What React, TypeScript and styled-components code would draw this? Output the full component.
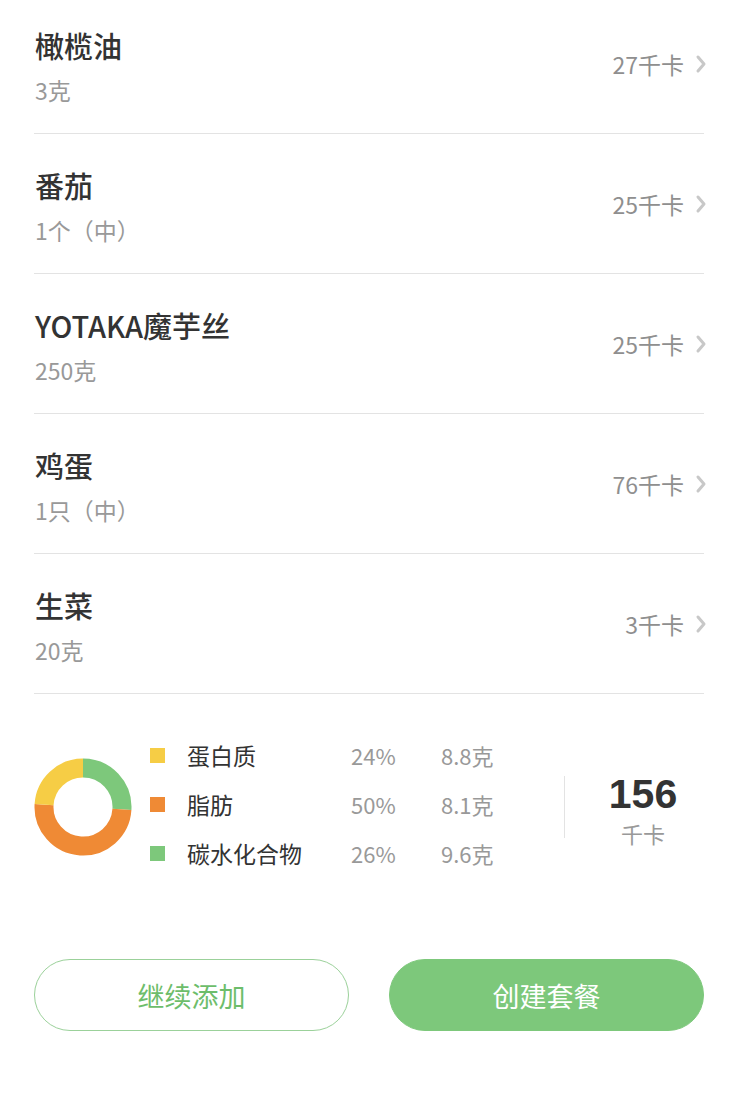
import styled, { createGlobalStyle } from 'styled-components';

const GlobalStyle = createGlobalStyle`
  html, body {
    margin: 0;
    padding: 0;
    background: #fff;
    font-family: "Noto Sans CJK SC", "Noto Sans", sans-serif;
  }
`

const Page = styled.div`
  width: 743px;
  margin-top: -6px;
`

const List = styled.div`
  padding: 0 39px 0 34px;
`

const Row = styled.div`
  height: 140px;
  box-sizing: border-box;
  border-bottom: 1px solid #e3e3e3;
  display: flex;
  align-items: center;
  justify-content: space-between;
`

const Info = styled.div`
  display: flex;
  flex-direction: column;
  gap: 11px;
  padding-left: 1px;
  margin-top: 3px;
`

const Name = styled.div`
  font-size: 29px;
  line-height: 38px;
  font-weight: 500;
  color: #333;
`

const Amount = styled.div`
  font-size: 23px;
  line-height: 30px;
  color: #999;
`

const Right = styled.div`
  display: flex;
  align-items: center;
  gap: 11px;
  color: #8f8f8f;
  font-size: 23px;
  margin-right: -3px;
`

const Summary = styled.div`
  display: flex;
  align-items: center;
  padding: 42px 22px 0 34px;
  height: 180px;
  box-sizing: border-box;
`

const Donut = styled.svg`
  width: 98px;
  height: 98px;
  flex-shrink: 0;
  margin-top: 4px;
`

const Legend = styled.div`
  display: grid;
  grid-template-columns: 37px 164px 90px 80px;
  row-gap: 17px;
  margin-left: 18px;
  margin-top: -2px;
  align-items: center;
`

const Swatch = styled.span<{ $color: string }>`
  width: 15px;
  height: 15px;
  background: ${p => p.$color};
`

const Label = styled.span`
  font-size: 23px;
  line-height: 32px;
  color: #333;
`

const Figure = styled.span`
  font-size: 22px;
  line-height: 32px;
  color: #999;
`

const Divider = styled.div`
  width: 1px;
  height: 62px;
  background: #e3e3e3;
  margin-left: 43px;
  margin-top: 4px;
`

const Total = styled.div`
  flex: 1;
  display: flex;
  flex-direction: column;
  align-items: center;
  margin-top: 10px;
`

const Kcal = styled.div`
  font-family: "Liberation Sans", Arial, sans-serif;
  font-size: 41px;
  font-weight: 700;
  color: #333;
  line-height: 46px;
`

const KcalUnit = styled.div`
  font-size: 22px;
  color: #999;
  line-height: 32px;
`

const Buttons = styled.div`
  display: flex;
  justify-content: space-between;
  padding: 85px 39px 0 34px;
`

const Button = styled.button<{ $primary?: boolean }>`
  width: 315px;
  height: 72px;
  border-radius: 36px;
  font-family: inherit;
  font-size: 27px;
  font-weight: 400;
  cursor: pointer;
  border: 1px solid ${p => (p.$primary ? '#7dc87b' : '#9bd19a')};
  background: ${p => (p.$primary ? '#7dc87b' : '#fff')};
  color: ${p => (p.$primary ? '#fff' : '#6dbd6b')};
`

const foods = [
  { name: '橄榄油', amount: '3克', kcal: '27千卡' },
  { name: '番茄', amount: '1个（中）', kcal: '25千卡' },
  { name: 'YOTAKA魔芋丝', amount: '250克', kcal: '25千卡' },
  { name: '鸡蛋', amount: '1只（中）', kcal: '76千卡' },
  { name: '生菜', amount: '20克', kcal: '3千卡' },
]

const macros = [
  { label: '蛋白质', pct: 24, grams: '8.8克', color: '#f6cd45' },
  { label: '脂肪', pct: 50, grams: '8.1克', color: '#ef8a35' },
  { label: '碳水化合物', pct: 26, grams: '9.6克', color: '#7dc87b' },
]

function Chevron() {
  return (
    <svg width="12" height="20" viewBox="0 0 12 20">
      <path d="M3 3 L9 10 L3 17" fill="none" stroke="#c8c8c8" strokeWidth="3" strokeLinecap="round" strokeLinejoin="round" />
    </svg>
  )
}

function arc(start: number, end: number) {
  const r = 39
  const c = 49
  const a0 = (start / 100) * Math.PI * 2 - Math.PI / 2
  const a1 = (end / 100) * Math.PI * 2 - Math.PI / 2
  const large = end - start > 50 ? 1 : 0
  return `M ${c + r * Math.cos(a0)} ${c + r * Math.sin(a0)} A ${r} ${r} 0 ${large} 1 ${c + r * Math.cos(a1)} ${c + r * Math.sin(a1)}`
}

function MacroDonut() {
  // clockwise from the top: carbs, fat, protein
  const order = [macros[2], macros[1], macros[0]]
  let acc = 0
  return (
    <Donut viewBox="0 0 98 98">
      {order.map(m => {
        const s = acc
        acc += m.pct
        return <path key={m.label} d={arc(s, acc)} fill="none" stroke={m.color} strokeWidth="19" />
      })}
    </Donut>
  )
}

export default function App() {
  return (
    <Page>
      <GlobalStyle />
      <List>
        {foods.map(f => (
          <Row key={f.name}>
            <Info>
              <Name>{f.name}</Name>
              <Amount>{f.amount}</Amount>
            </Info>
            <Right>
              {f.kcal}
              <Chevron />
            </Right>
          </Row>
        ))}
      </List>
      <Summary>
        <MacroDonut />
        <Legend>
          {macros.map(m => (
            <>
              <Swatch key={m.label + 's'} $color={m.color} />
              <Label key={m.label}>{m.label}</Label>
              <Figure key={m.label + 'p'}>{m.pct}%</Figure>
              <Figure key={m.label + 'g'}>{m.grams}</Figure>
            </>
          ))}
        </Legend>
        <Divider />
        <Total>
          <Kcal>156</Kcal>
          <KcalUnit>千卡</KcalUnit>
        </Total>
      </Summary>
      <Buttons>
        <Button>继续添加</Button>
        <Button $primary>创建套餐</Button>
      </Buttons>
    </Page>
  )
}
